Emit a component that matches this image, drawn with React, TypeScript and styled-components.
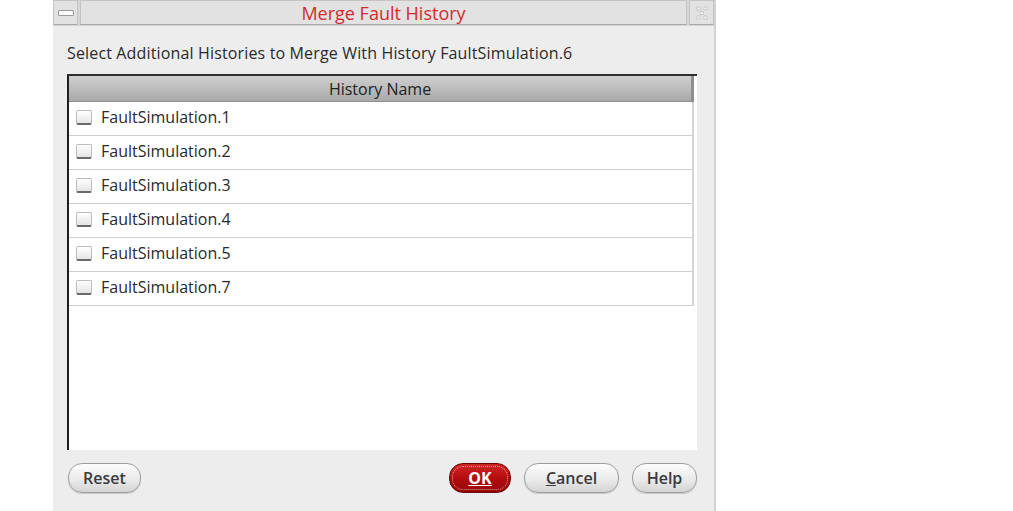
import React from 'react'
import styled, { createGlobalStyle } from 'styled-components'

const GlobalStyle = createGlobalStyle`
    html, body {
        margin: 0;
        padding: 0;
        background: #ffffff;
    }
    body {
        font-family: "Open Sans", "DejaVu Sans", sans-serif;
    }
`

const Page = styled.div`
    display: flex;
    width: 1013px;
    height: 511px;
    padding-left: 53px;
    box-sizing: border-box;
    overflow: hidden;
`

const Dialog = styled.div`
    width: 663px;
    height: 511px;
    display: flex;
    flex-direction: column;
    background: #ededed;
    border-right: 2px solid #d2d2d2;
    box-sizing: border-box;
`

const TitleBar = styled.div`
    display: flex;
    height: 26px;
    gap: 2px;
    background: #d6d6d6;
`

const TitleButton = styled.div`
    width: 25px;
    height: 25px;
    display: flex;
    align-items: center;
    justify-content: center;
    background: #e2e2e2;
    border: 1px solid #c4c4c4;
    border-bottom-color: #a8a8a8;
    box-sizing: border-box;
`

const MinGlyph = styled.div`
    width: 14px;
    height: 4px;
    background: #fafafa;
    border: 1px solid #9a9a9a;
    border-radius: 1px;
`

const TitleText = styled.div`
    flex: 1;
    height: 25px;
    display: flex;
    align-items: center;
    justify-content: center;
    background: #e2e2e2;
    border: 1px solid #c4c4c4;
    border-bottom-color: #a8a8a8;
    box-sizing: border-box;
    color: #d42a2f;
    font-size: 18px;
`

const Body = styled.div`
    flex: 1;
    display: flex;
    flex-direction: column;
    padding: 0 17px 0 14px;
`

const Prompt = styled.div`
    margin-top: 17px;
    height: 21px;
    line-height: 21px;
    font-size: 16px;
    letter-spacing: 0.15px;
    color: #2a2a2a;
`

const Table = styled.div`
    margin-top: 10px;
    height: 376px;
    display: flex;
    flex-direction: column;
    background: #ffffff;
    border-top: 2px solid #2e2e2e;
    border-left: 2px solid #1e1e1e;
    box-sizing: border-box;
`

const Header = styled.div`
    height: 25px;
    display: flex;
    align-items: center;
    justify-content: center;
    background: linear-gradient(#cfcfcf, #a9a9a9);
    border-right: 3px solid #8e8e8e;
    border-bottom: 1px solid #909090;
    font-size: 16px;
    color: #222;
    margin-right: 3px;
`

const Row = styled.div`
    height: 34px;
    display: flex;
    align-items: center;
    gap: 9px;
    padding: 0 0 3px 7px;
    border-bottom: 1px solid #cfcfcf;
    border-right: 2px solid #d4d4d4;
    margin-right: 3px;
    box-sizing: border-box;
    font-size: 16px;
    color: #2a2a2a;
`

const Check = styled.div`
    width: 16px;
    height: 15px;
    margin-top: 1px;
    border: 1px solid #bcbcbc;
    border-bottom: 2px solid #6a6a6a;
    border-radius: 2px;
    background: linear-gradient(#ffffff, #e4e4e4);
    box-sizing: border-box;
`

const Footer = styled.div`
    display: flex;
    align-items: center;
    gap: 13px;
    height: 31px;
    margin-top: 12px;
    padding-left: 1px;
`

const Spacer = styled.div`
    flex: 1;
`

const Button = styled.div<{ $w: number; $primary?: boolean }>`
    width: ${p => p.$w}px;
    height: 30px;
    display: flex;
    align-items: center;
    justify-content: center;
    border-radius: 14px;
    box-sizing: border-box;
    font-size: 16px;
    font-weight: ${p => (p.$primary ? 700 : 600)};
    color: ${p => (p.$primary ? '#ffffff' : '#3a3a3a')};
    background: ${p =>
        p.$primary
            ? 'linear-gradient(#d42424, #b00b0e 55%, #980809)'
            : 'linear-gradient(#fdfdfd, #e8e8e8 60%, #d4d4d4)'};
    border: 1px solid ${p => (p.$primary ? '#6e0808' : '#9e9e9e')};
    box-shadow: ${p => (p.$primary ? 'none' : '0 1px 1px rgba(0,0,0,0.15)')};
    outline: ${p => (p.$primary ? '1px dotted rgba(255,255,255,0.6)' : 'none')};
    outline-offset: -4px;
`

const Mnemonic = styled.span`
    text-decoration: underline;
`

const histories = [
    'FaultSimulation.1',
    'FaultSimulation.2',
    'FaultSimulation.3',
    'FaultSimulation.4',
    'FaultSimulation.5',
    'FaultSimulation.7',
]

const App = () => {
    return (
        <Page>
            <GlobalStyle />
            <Dialog>
                <TitleBar>
                    <TitleButton>
                        <MinGlyph />
                    </TitleButton>
                    <TitleText>Merge Fault History</TitleText>
                    <TitleButton>
                        <svg width="12" height="14" viewBox="0 0 12 14">
                            <g fill="#f4f4f4" stroke="#bdbdbd" strokeWidth="0.7">
                                <rect x="1" y="1" width="3" height="3" />
                                <rect x="8" y="1" width="3" height="3" />
                                <rect x="4.5" y="5.5" width="3" height="3" />
                                <rect x="1" y="10" width="3" height="3" />
                                <rect x="8" y="10" width="3" height="3" />
                            </g>
                        </svg>
                    </TitleButton>
                </TitleBar>
                <Body>
                    <Prompt>Select Additional Histories to Merge With History FaultSimulation.6</Prompt>
                    <Table>
                        <Header>History Name</Header>
                        {histories.map(h => (
                            <Row key={h}>
                                <Check />
                                {h}
                            </Row>
                        ))}
                    </Table>
                    <Footer>
                        <Button $w={73}>Reset</Button>
                        <Spacer />
                        <Button $w={62} $primary>
                            <Mnemonic>OK</Mnemonic>
                        </Button>
                        <Button $w={95}>
                            <span>
                                <Mnemonic>C</Mnemonic>ancel
                            </span>
                        </Button>
                        <Button $w={65}>Help</Button>
                    </Footer>
                </Body>
            </Dialog>
        </Page>
    )
}

export default App
